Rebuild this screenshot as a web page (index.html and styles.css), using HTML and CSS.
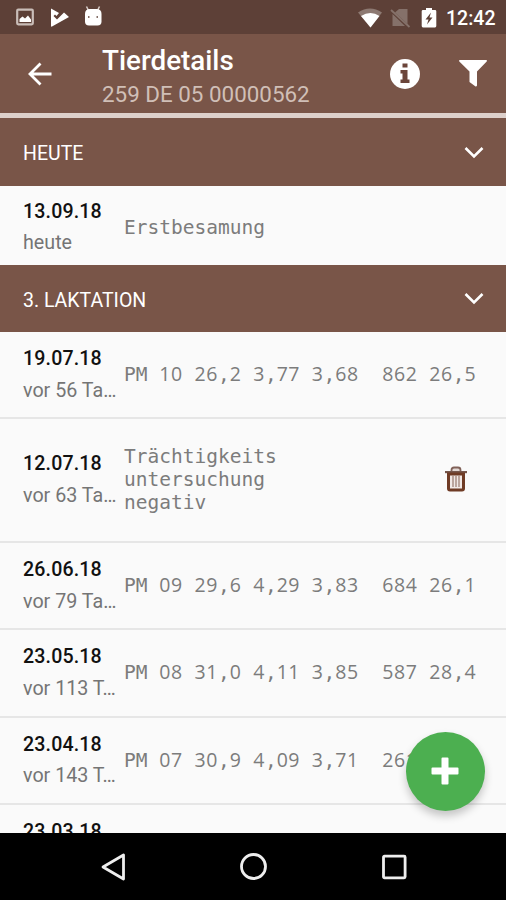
FILE: index.html
```html
<!DOCTYPE html>
<html lang="de">
<head>
<meta charset="utf-8">
<title>Tierdetails</title>
<link rel="stylesheet" href="styles.css">
</head>
<body>
<div class="status">
  <svg class="notifications" width="90" height="22" viewBox="0 0 90 22">
    <rect x="1.2" y="3.7" width="15.6" height="14.6" rx="1" fill="none" stroke="#c9bdb8" stroke-width="2.2"/>
    <path d="M3.5 16v-3l3-2.500 2.500 2 3-3 3 4v2.500z" fill="#fff"/>
    <path d="M35 2.500 43 7l-2.500 3-1.500-1.500-1.500 1.500 3.500 3.500 7-7 5 4.500L36 20.500q-1 .5-1-.8z" fill="#fff"/>
    <path d="m70.500.5 2 4M83.500 .5l-2 4" stroke="#d8cdc9" stroke-width="1.500"/>
    <path d="M69 8q0-5 5-5h6.500q5 0 5 5v7.500q0 4-4 4H73q-4 0-4-4z" fill="#fff"/>
    <path d="M72 11h1.500M80.500 11H82" stroke="#5d4037" stroke-width="1.500"/>
  </svg>
  <div class="system">
    <svg width="82" height="24" viewBox="0 0 82 24">
      <path d="M0 6.500q12-8 24 0L12.500 21.500z" fill="#8d7972"/>
      <path d="M3 10q9.500-6 18.500 0l-9 11.500z" fill="#fff"/>
      <path d="M41 3h8.500v15L37 6.500zM34.500 8 47 20H34.500z" fill="#85716a"/>
      <path d="m33 4 18.500 17" stroke="#85716a" stroke-width="1.800"/>
      <path d="M65 4h3V2h6v2h3q1.300 0 1.300 1.300v14.800q0 1.400-1.300 1.400H65q-1.300 0-1.300-1.400V5.300Q63.700 4 65 4z" fill="#fff"/>
      <path d="m73 6.500-5.500 7h3L69 18.500l5.500-7h-3z" fill="#5d4037"/>
    </svg>
    <span class="clock">12:42</span>
  </div>
</div>

<header class="appbar">
  <svg class="back" width="24" height="24" viewBox="0 0 24 24"><path d="M23.500 12H3M12.500 1.500 2 12l10.500 10.500" fill="none" stroke="#fff" stroke-width="2.800"/></svg>
  <div class="titles">
    <h1>Tierdetails</h1>
    <p>259 DE 05 00000562</p>
  </div>
  <svg class="info" width="30" height="30" viewBox="0 0 30 30">
    <circle cx="15" cy="15" r="15" fill="#fff"/>
    <path d="M12.500 4.500h5v4h-5zM10.500 11h7v9.500h2V24h-9v-3.500h2v-6h-2z" fill="#6b453a"/>
  </svg>
  <svg class="filter" width="28" height="28" viewBox="0 0 28 28"><path d="M.8 0h26.400q1.300.3.500 1.500L18 11.500v14q-.5 1.500-1.800.8L10.500 22V11.500L.3 1.500Q-.3.300.8 0z" fill="#fff"/></svg>
</header>

<main class="list">
  <h2 class="section">HEUTE<svg width="20" height="13" viewBox="0 0 20 13"><path d="m1.500 2 8.500 8.500L18.500 2" fill="none" stroke="#fff" stroke-width="2.600"/></svg></h2>
  <div class="row first">
    <div class="when"><b>13.09.18</b><span>heute</span></div>
    <div class="what">Erstbesamung</div>
  </div>
  <h2 class="section">3. LAKTATION<svg width="20" height="13" viewBox="0 0 20 13"><path d="m1.500 2 8.500 8.500L18.500 2" fill="none" stroke="#fff" stroke-width="2.600"/></svg></h2>
  <div class="row">
    <div class="when"><b>19.07.18</b><span>vor 56 Ta…</span></div>
    <div class="what">PM <i>10</i> <i>26</i>,<i>2</i> <i>3</i>,<i>77</i> <i>3</i>,<i>68</i>  <i>862</i> <i>26</i>,<i>5</i></div>
  </div>
  <div class="row tall">
    <div class="when"><b>12.07.18</b><span>vor 63 Ta…</span></div>
    <div class="what">Trächtigkeits
untersuchung
negativ</div>
    <svg class="trash" width="22" height="26" viewBox="0 0 22 26">
      <path d="M6.500 5.500V4q0-2.500 2.500-2.500h4q2.500 0 2.500 2.500v1.500" fill="#e3d8d4" stroke="#806158" stroke-width="1.800"/>
      <path d="M0 5h22v2.200H0z" fill="#75574d"/>
      <path d="M3.500 8h15v14.500q0 1.500-1.500 1.500H5q-1.500 0-1.500-1.500z" fill="#f1e8e5" stroke="#6f3b25" stroke-width="3"/>
      <path d="M8 9v12M11 9v12M14 9v12" stroke="#a98e85" stroke-width="1.500"/>
    </svg>
  </div>
  <div class="row">
    <div class="when"><b>26.06.18</b><span>vor 79 Ta…</span></div>
    <div class="what">PM <i>09</i> <i>29</i>,<i>6</i> <i>4</i>,<i>29</i> <i>3</i>,<i>83</i>  <i>684</i> <i>26</i>,<i>1</i></div>
  </div>
  <div class="row">
    <div class="when"><b>23.05.18</b><span>vor 113 T…</span></div>
    <div class="what">PM <i>08</i> <i>31</i>,<i>0</i> <i>4</i>,<i>11</i> <i>3</i>,<i>85</i>  <i>587</i> <i>28</i>,<i>4</i></div>
  </div>
  <div class="row">
    <div class="when"><b>23.04.18</b><span>vor 143 T…</span></div>
    <div class="what">PM <i>07</i> <i>30</i>,<i>9</i> <i>4</i>,<i>09</i> <i>3</i>,<i>71</i>  <i>261</i></div>
  </div>
  <div class="row">
    <div class="when"><b>23.03.18</b></div>
  </div>
  <div class="fab"><svg width="28" height="28" viewBox="0 0 28 28"><path d="M11.500.5h5q1 0 1 1v9h9q1 0 1 1v5q0 1-1 1h-9v9q0 1-1 1h-5q-1 0-1-1v-9h-9q-1 0-1-1v-5q0-1 1-1h9v-9q0-1 1-1z" fill="#fff"/></svg></div>
</main>

<nav class="navbar">
  <svg width="26" height="30" viewBox="0 0 26 30"><path d="M22.500 3v24L2 15z" fill="none" stroke="#eee" stroke-width="2.800" stroke-linejoin="round"/></svg>
  <svg width="28" height="28" viewBox="0 0 28 28"><circle cx="13.500" cy="13.500" r="12" fill="none" stroke="#eee" stroke-width="2.800"/></svg>
  <svg width="26" height="26" viewBox="0 0 26 26"><rect x="2.500" y="2.200" width="21.600" height="21.600" rx="1" fill="none" stroke="#eee" stroke-width="2.800"/></svg>
</nav>
</body>
</html>
```
FILE: styles.css
```css
* { box-sizing: border-box; }
body {
  margin: 0;
  width: 506px;
  height: 900px;
  display: flex;
  flex-direction: column;
  overflow: hidden;
  background: #fafafa;
  font-family: Roboto, sans-serif;
}
svg { display: block; flex: none; }
h1, h2, p { margin: 0; font-weight: 400; }

.status {
  height: 34px;
  flex: none;
  display: flex;
  justify-content: space-between;
  padding: 6px 10px 0 16px;
  background: #5d4037;
}
.system { display: flex; gap: 6px; }
.clock { color: #fff; font-size: 19.5px; font-weight: 500; line-height: 25px; width: 50px; white-space: nowrap; }

.appbar {
  height: 84px;
  flex: none;
  display: flex;
  align-items: flex-start;
  padding: 0 19px 0 28px;
  background: #795548;
  border-bottom: 5px solid #ddd0cb;
}
.back { margin-top: 28px; }
.titles { margin-left: 50px; padding-top: 10px; flex: 1; white-space: nowrap; }
.titles h1 { color: #fff; font-size: 27.8px; font-weight: 500; line-height: 34px; }
.titles p { color: #d0bfb7; font-size: 22.4px; line-height: 33px; }
.info { margin-top: 25px; }
.filter { margin: 26px 0 0 39px; }

.list { height: 715px; flex: none; position: relative; overflow: hidden; }
.section {
  height: 67.5px;
  display: flex;
  align-items: center;
  justify-content: space-between;
  padding: 4px 22px 0 23px;
  background: #795548;
  color: #fff;
  font-size: 19.5px;
}
.section svg { margin-bottom: 3px; }
.row {
  height: 87.2px;
  display: flex;
  align-items: center;
  padding: 0 39px 0 23px;
  border-bottom: 2px solid #e6e6e6;
}
.row.first { height: 79px; border: 0; padding-top: 4px; }
.row.tall { height: 124px; padding-bottom: 1px; }
.row:last-of-type { border: 0; }
.when { width: 94px; flex: none; height: 63px; line-height: 31.5px; }
.when b, .when span { display: block; white-space: nowrap; }
.when b { color: #111; font-size: 19.6px; font-weight: 500; letter-spacing: .15px; }
.when span { color: #757575; font-size: 19.7px; }
.what {
  margin-left: 7px;
  flex: 1;
  color: #7c7c7c;
  font: 19.5px/23px "DejaVu Sans Mono", monospace;
  white-space: pre;
}
.what i { font: 19.5px/20px "Open Sans", sans-serif; letter-spacing: .58px; }
.trash { margin-bottom: 2px; }

.fab {
  position: absolute;
  right: 21.5px;
  bottom: 22.5px;
  width: 79px;
  height: 79px;
  display: grid;
  place-items: center;
  border-radius: 50%;
  background: #4caf50;
  box-shadow: 0 5px 9px rgba(0, 0, 0, .22);
}

.navbar {
  flex: 1;
  display: flex;
  align-items: center;
  justify-content: space-between;
  padding: 0 99px 0 101px;
  background: #000;
}
```
